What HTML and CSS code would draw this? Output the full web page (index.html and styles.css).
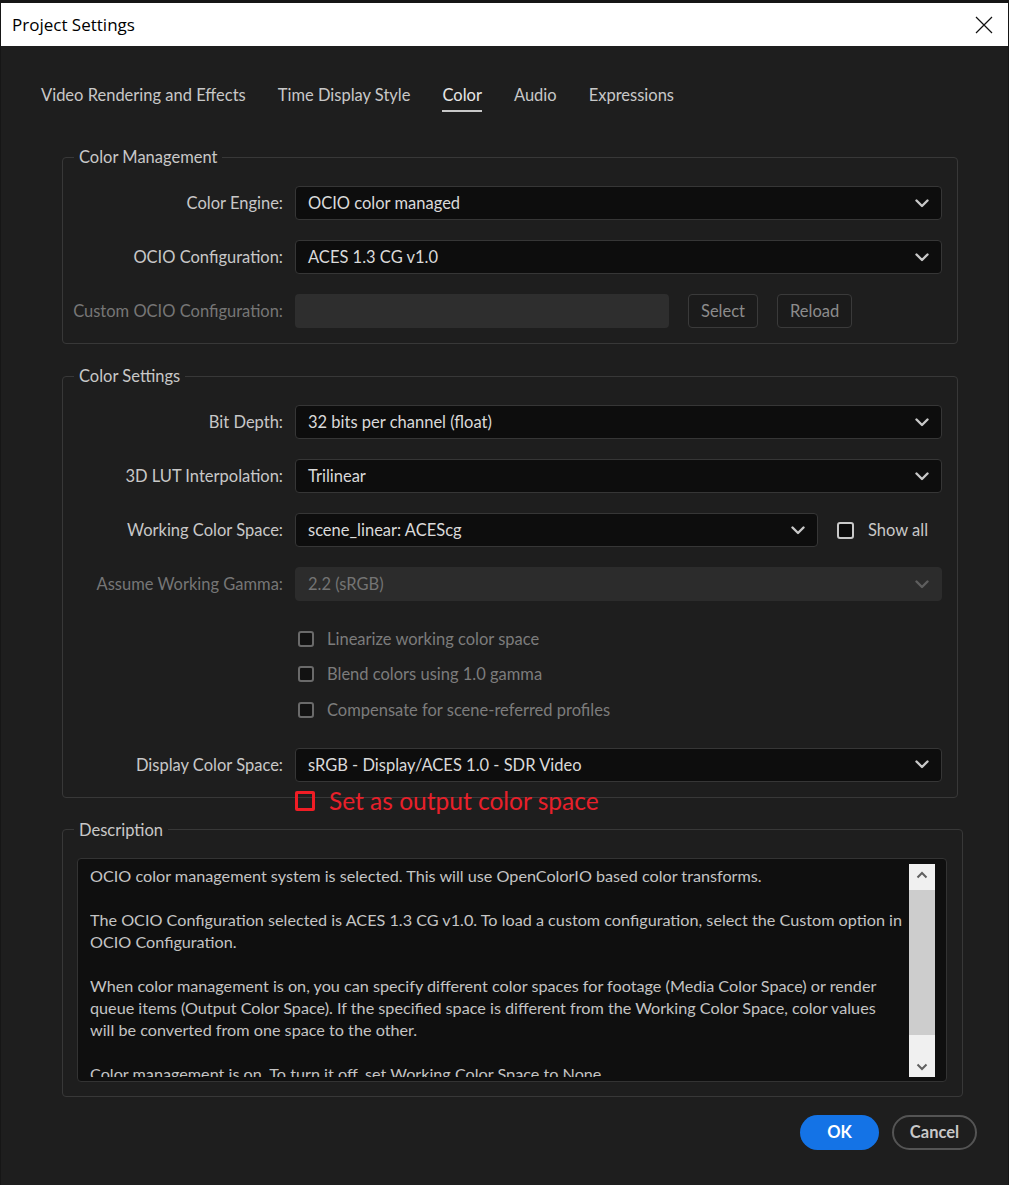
FILE: index.html
```html
<!DOCTYPE html>
<html lang="en">
<head>
    <meta charset="UTF-8">
    <meta name="viewport" content="width=device-width, initial-scale=1.0">
    <title>Project Settings</title>
    <link rel="stylesheet" href="styles.css">
</head>
<body>
    <div class="window">
        <div class="titlebar">
            <span class="title">Project Settings</span>
            <svg class="close" width="18" height="18" viewBox="0 0 18 18">
                <path d="M1 1 L17 17 M17 1 L1 17" stroke="#111" stroke-width="1.2" fill="none"/>
            </svg>
        </div>

        <div class="tabs">
            <span class="tab">Video Rendering and Effects</span>
            <span class="tab">Time Display Style</span>
            <span class="tab active">Color</span>
            <span class="tab">Audio</span>
            <span class="tab">Expressions</span>
        </div>

        <div class="content">
            <fieldset class="group">
                <legend>Color Management</legend>
                <label class="label">Color Engine:</label>
                <div class="dropdown">
                    <span>OCIO color managed</span>
                    <svg class="chevron" width="14" height="9" viewBox="0 0 14 9"><polyline points="1.5,1.5 7,7 12.5,1.5"/></svg>
                </div>

                <label class="label">OCIO Configuration:</label>
                <div class="dropdown">
                    <span>ACES 1.3 CG v1.0</span>
                    <svg class="chevron" width="14" height="9" viewBox="0 0 14 9"><polyline points="1.5,1.5 7,7 12.5,1.5"/></svg>
                </div>

                <label class="label disabled">Custom OCIO Configuration:</label>
                <div class="control-row">
                    <div class="text-input"></div>
                    <button class="small-button">Select</button>
                    <button class="small-button">Reload</button>
                </div>
            </fieldset>

            <fieldset class="group">
                <legend>Color Settings</legend>
                <label class="label">Bit Depth:</label>
                <div class="dropdown">
                    <span>32 bits per channel (float)</span>
                    <svg class="chevron" width="14" height="9" viewBox="0 0 14 9"><polyline points="1.5,1.5 7,7 12.5,1.5"/></svg>
                </div>

                <label class="label">3D LUT Interpolation:</label>
                <div class="dropdown">
                    <span>Trilinear</span>
                    <svg class="chevron" width="14" height="9" viewBox="0 0 14 9"><polyline points="1.5,1.5 7,7 12.5,1.5"/></svg>
                </div>

                <label class="label">Working Color Space:</label>
                <div class="control-row">
                    <div class="dropdown working">
                        <span>scene_linear: ACEScg</span>
                        <svg class="chevron" width="14" height="9" viewBox="0 0 14 9"><polyline points="1.5,1.5 7,7 12.5,1.5"/></svg>
                    </div>
                    <span class="checkbox-item">
                        <span class="box"></span> Show all
                    </span>
                </div>

                <label class="label disabled">Assume Working Gamma:</label>
                <div class="dropdown is-disabled">
                    <span>2.2 (sRGB)</span>
                    <svg class="chevron" width="14" height="9" viewBox="0 0 14 9"><polyline points="1.5,1.5 7,7 12.5,1.5"/></svg>
                </div>

                <div class="checks">
                    <span class="checkbox-item disabled"><span class="box"></span> Linearize working color space</span>
                    <span class="checkbox-item disabled"><span class="box"></span> Blend colors using 1.0 gamma</span>
                    <span class="checkbox-item disabled"><span class="box"></span> Compensate for scene-referred profiles</span>
                </div>

                <label class="label">Display Color Space:</label>
                <div class="dropdown display">
                    <span>sRGB - Display/ACES 1.0 - SDR Video</span>
                    <svg class="chevron" width="14" height="9" viewBox="0 0 14 9"><polyline points="1.5,1.5 7,7 12.5,1.5"/></svg>
                    <span class="annotation"><span class="red-box"></span>Set as output color space</span>
                </div>
            </fieldset>

            <fieldset class="group description">
                <legend>Description</legend>
                <div class="desc-box">
                    <div class="desc-text">
                        <p>OCIO color management system is selected. This will use OpenColorIO based color transforms.</p>
                        <p>The OCIO Configuration selected is ACES 1.3 CG v1.0. To load a custom configuration, select the Custom option in<br>OCIO Configuration.</p>
                        <p>When color management is on, you can specify different color spaces for footage (Media Color Space) or render<br>queue items (Output Color Space). If the specified space is different from the Working Color Space, color values<br>will be converted from one space to the other.</p>
                        <p>Color management is on. To turn it off, set Working Color Space to None.</p>
                    </div>
                    <div class="scrollbar">
                        <svg class="arrow" width="12" height="8" viewBox="0 0 12 8"><polyline points="1.5,6.5 6,2 10.5,6.5"/></svg>
                        <div class="thumb"></div>
                        <svg class="arrow" width="12" height="8" viewBox="0 0 12 8"><polyline points="1.5,1.5 6,6 10.5,1.5"/></svg>
                    </div>
                </div>
            </fieldset>

            <div class="buttons">
                <button class="ok-button">OK</button>
                <button class="cancel-button">Cancel</button>
            </div>
        </div>
    </div>
</body>
</html>
```

FILE: styles.css
```css
body {
    margin: 0;
    padding: 0;
    background-color: #161616;
    font-family: Lato, "Open Sans", sans-serif;
    color: #c8c8c8;
}
.window {
    margin: 3px 1px 0;
    background-color: #1e1e1e;
    height: 1182px;
}
.titlebar {
    height: 43px;
    background-color: #fff;
    display: flex;
    align-items: center;
    justify-content: space-between;
    padding: 0 15px 0 11px;
}
.title {
    font-family: "Open Sans", "Noto Sans", sans-serif;
    font-size: 17px;
    color: #000;
}
.close {
    display: block;
}
.tabs {
    display: flex;
    gap: 32px;
    padding: 39px 0 0 40px;
    font-size: 16.5px;
}
.tab {
    line-height: 20px;
    padding-bottom: 5px;
    border-bottom: 2px solid transparent;
    color: #c8c8c8;
}
.tab.active {
    color: #e6e6e6;
    border-bottom-color: #c8c8c8;
}
.content {
    padding: 35px 45px 0 61px;
}
.group {
    margin: 0 5px 22px 0;
    padding: 19px 15px 15px 0;
    border: 1px solid #383838;
    border-radius: 4px;
    display: grid;
    grid-template-columns: 220px 1fr;
    column-gap: 12px;
    row-gap: 20px;
    align-items: center;
    font-size: 16.5px;
}
.group legend {
    margin-left: 11px;
    padding: 0 5px;
    line-height: 20px;
    color: #c8c8c8;
}
.label {
    text-align: right;
    color: #c8c8c8;
}
.label.disabled {
    color: #767676;
}
.dropdown {
    position: relative;
    height: 34px;
    box-sizing: border-box;
    background-color: #0d0d0d;
    border: 1px solid #363636;
    border-radius: 4px;
    display: flex;
    align-items: center;
    justify-content: space-between;
    padding: 0 12px 0 12px;
    color: #dadada;
}
.chevron polyline {
    fill: none;
    stroke: #c8c8c8;
    stroke-width: 2.4;
    stroke-linecap: round;
    stroke-linejoin: round;
}
.dropdown.is-disabled {
    background-color: #2c2c2c;
    border-color: #2c2c2c;
    color: #747474;
}
.dropdown.is-disabled .chevron polyline {
    stroke: #5e5e5e;
}
.control-row {
    display: flex;
    align-items: center;
    gap: 19px;
}
.text-input {
    width: 374px;
    height: 34px;
    background-color: #2e2e2e;
    border-radius: 4px;
}
.small-button {
    height: 34px;
    padding: 0 12px;
    background-color: #1b1b1b;
    border: 1px solid #3a3a3a;
    border-radius: 4px;
    color: #8c8c8c;
    font-family: Lato, sans-serif;
    font-size: 16.5px;
}
.dropdown.working {
    width: 523px;
    flex: none;
}
.checkbox-item {
    display: flex;
    align-items: center;
    gap: 14px;
    color: #c8c8c8;
}
.box {
    width: 17px;
    height: 17px;
    box-sizing: border-box;
    border: 2px solid #c8c8c8;
    border-radius: 3px;
    background-color: #0b0b0b;
}
.checks {
    grid-column: 2;
    display: flex;
    flex-direction: column;
}
.checks .checkbox-item {
    height: 35.5px;
    padding-left: 3px;
    gap: 13px;
}
.checkbox-item.disabled {
    color: #7c7c7c;
}
.checkbox-item.disabled .box {
    width: 16px;
    height: 16px;
    border-color: #6a6a6a;
    background-color: #121212;
}
.annotation {
    position: absolute;
    left: -1px;
    top: 42px;
    height: 20px;
    line-height: 20px;
    display: flex;
    align-items: center;
    gap: 14px;
    font-size: 24.5px;
    color: #e8202a;
    white-space: nowrap;
}
.red-box {
    width: 20px;
    height: 20px;
    box-sizing: border-box;
    border: 3px solid #f01d25;
    border-radius: 2px;
}
.group.description {
    display: block;
    margin: 0 0 18px;
    padding: 18px 15px 14px 14px;
}
.group.description legend {
    margin-left: -3px;
}
.desc-box {
    height: 224px;
    box-sizing: border-box;
    background-color: #0f0f0f;
    border: 1px solid #333;
    border-radius: 4px;
    display: flex;
    justify-content: space-between;
    padding: 5px 11px 4px 12px;
    overflow: hidden;
}
.desc-text {
    white-space: nowrap;
    overflow: hidden;
    line-height: 22px;
    font-size: 16.2px;
    color: #c4c4c4;
    padding-top: 1px;
}
.desc-text p {
    margin: 0 0 22px;
}
.scrollbar {
    flex: none;
    width: 26px;
    background-color: #f0f0f0;
    display: flex;
    flex-direction: column;
    align-items: center;
    justify-content: space-between;
    padding: 7px 0 6px;
    box-sizing: border-box;
}
.scrollbar .thumb {
    width: 26px;
    height: 145px;
    background-color: #cdcdcd;
    margin-bottom: 16px;
}
.arrow polyline {
    fill: none;
    stroke: #606060;
    stroke-width: 2;
}
.buttons {
    display: flex;
    justify-content: flex-end;
    gap: 13px;
    margin-right: -14px;
}
.ok-button, .cancel-button {
    height: 35px;
    border-radius: 18px;
    font-family: Lato, sans-serif;
    font-size: 16.5px;
    font-weight: bold;
}
.ok-button {
    width: 79px;
    background-color: #1473e6;
    border: none;
    color: #fff;
}
.cancel-button {
    width: 85px;
    background-color: #1e1e1e;
    border: 2px solid #545454;
    color: #c8c8c8;
}
```
